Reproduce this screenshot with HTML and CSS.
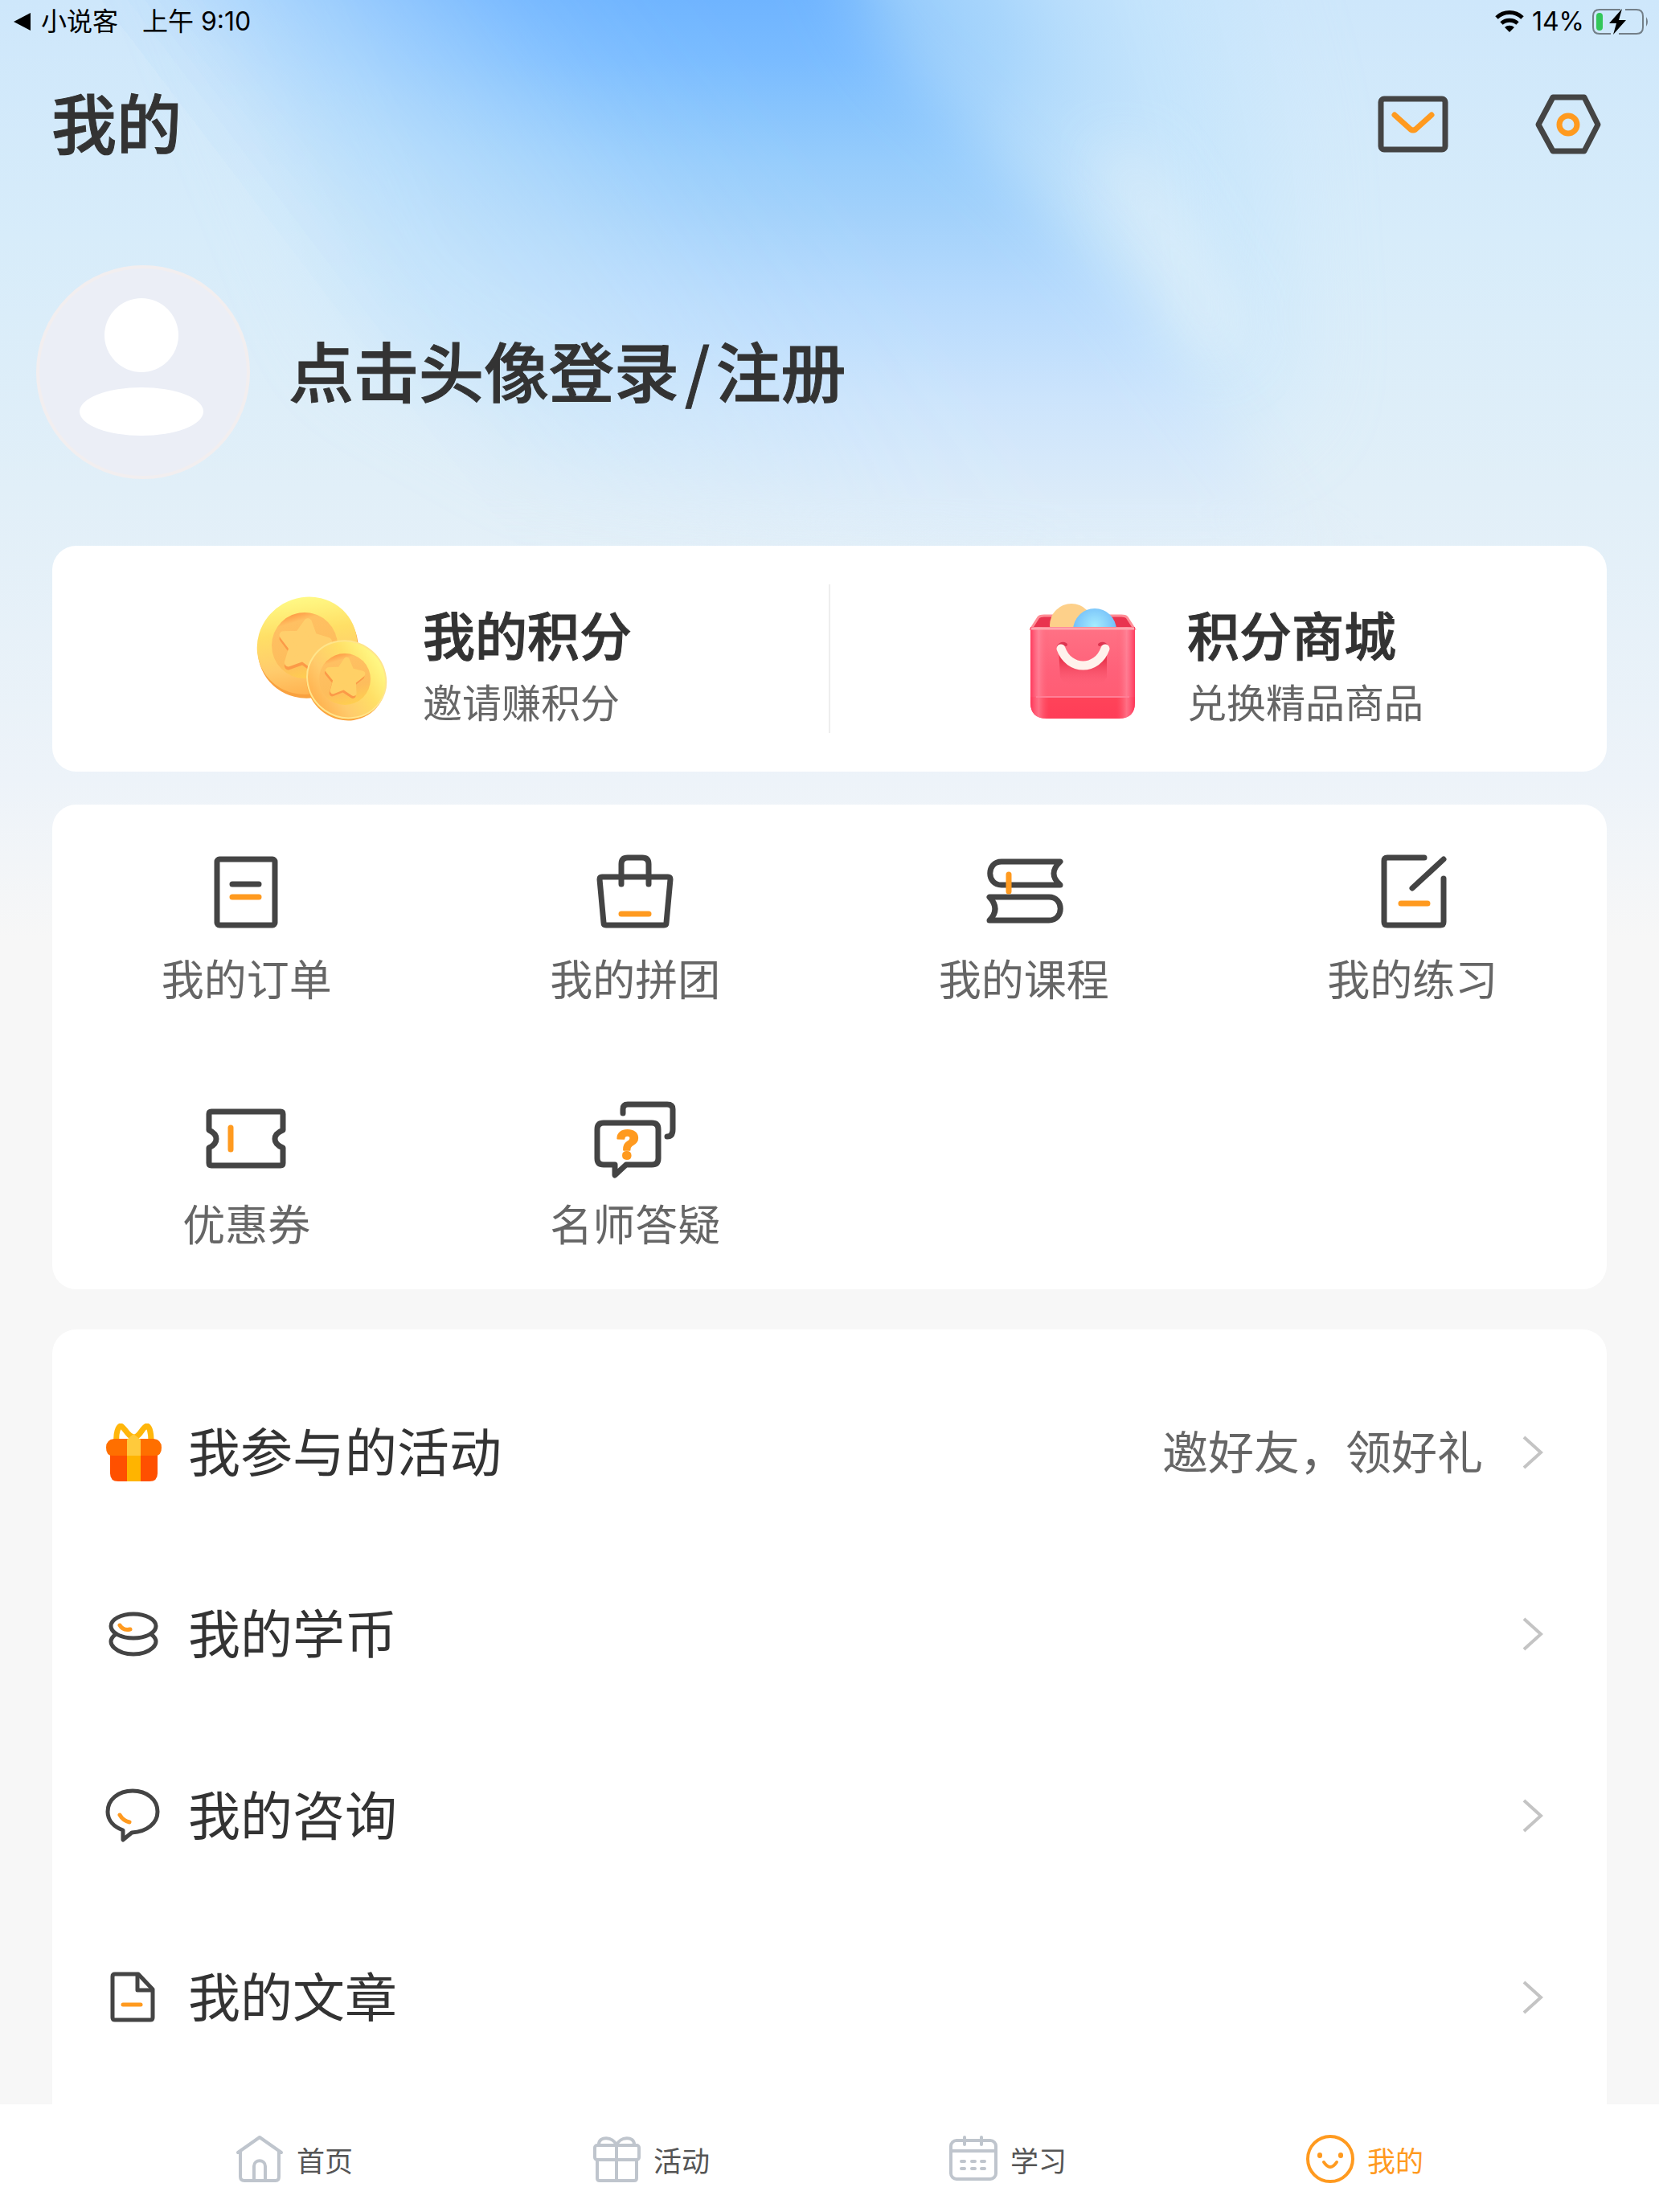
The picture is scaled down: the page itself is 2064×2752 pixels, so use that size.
FILE: index.html
```html
<!DOCTYPE html>
<html lang="zh-CN">
<head>
  <meta charset="UTF-8" />
  <meta name="viewport" content="width=device-width, initial-scale=1" />
  <title>我的</title>
  <link rel="stylesheet" href="styles.css">
</head>
<body>
  <svg class="backdrop" viewBox="0 0 2064 1170" preserveAspectRatio="none" aria-hidden="true">
    <defs>
      <linearGradient id="sky" x1="0" y1="0" x2="0" y2="1">
        <stop offset="0" stop-color="#cee7fb" />
        <stop offset="0.25" stop-color="#d7ecfa" />
        <stop offset="0.52" stop-color="#e1eff8" />
        <stop offset="0.83" stop-color="#edf3f9" />
        <stop offset="1" stop-color="#f7f7f7" />
      </linearGradient>
      <linearGradient id="core" gradientUnits="userSpaceOnUse" x1="0" y1="0" x2="0" y2="720">
        <stop offset="0" stop-color="#6fb4ff" />
        <stop offset="0.1" stop-color="#79bbff" />
        <stop offset="0.18" stop-color="#86c3fd" />
        <stop offset="0.28" stop-color="#96ccfc" />
        <stop offset="0.37" stop-color="#a2d1fb" />
        <stop offset="0.51" stop-color="#b6dafd" />
        <stop offset="0.69" stop-color="#cce4fc" />
        <stop offset="0.86" stop-color="#dbebf9" />
        <stop offset="1" stop-color="#e1effa" stop-opacity="0" />
      </linearGradient>
      <linearGradient id="fade" gradientUnits="userSpaceOnUse" x1="130" y1="0" x2="577" y2="-341">
        <stop offset="0" stop-color="#000" />
        <stop offset="0.3" stop-color="#555" />
        <stop offset="0.75" stop-color="#e4e4e4" />
        <stop offset="1" stop-color="#fff" />
      </linearGradient>
      <radialGradient id="wing" gradientUnits="userSpaceOnUse" cx="0" cy="0" r="1" gradientTransform="translate(1060 0) rotate(30) scale(520 330)">
        <stop offset="0" stop-color="#8ec7fc" />
        <stop offset="0.4" stop-color="#a3d3fc" stop-opacity="0.85" />
        <stop offset="1" stop-color="#c4e4fc" stop-opacity="0" />
      </radialGradient>
      <filter id="blurM" x="-50%" y="-50%" width="200%" height="200%"><feGaussianBlur stdDeviation="60" /></filter>
      <filter id="blurS" x="-20%" y="-20%" width="140%" height="140%"><feGaussianBlur stdDeviation="36" /></filter>
      <mask id="beam" maskUnits="userSpaceOnUse" x="0" y="0" width="2064" height="1170">
        <path d="M-200 -200H990L1060 0L1110 80L1270 230L1400 370L1700 800V1300H-200Z" fill="url(#fade)" filter="url(#blurS)" />
      </mask>
    </defs>
    <rect width="2064" height="1170" fill="url(#sky)" />
    <path d="M200 -200H1480L1580 160L1600 500L1300 600L700 560L450 420Z" fill="#bfe3fd" opacity="0.5" filter="url(#blurM)" />
    <rect width="2064" height="600" fill="url(#wing)" />
    <path d="M1360 180L1420 190L1560 420L1500 460Z" fill="#e2f0f9" opacity="0.7" filter="url(#blurS)" />
    <rect width="2064" height="720" fill="url(#core)" mask="url(#beam)" />
  </svg>

  <div class="status-bar">
    <a href="#" class="back-app">
      <svg width="24" height="24" viewBox="0 0 24 24"><path d="M1 12L22 1V23Z" fill="#000" /></svg>
      小说客
    </a>
    <span class="clock">上午 9:10</span>
    <div class="status-right">
      <svg width="38" height="28" viewBox="0 0 38 28">
        <path d="M3 9A23 23 0 0 1 35 9M9 16A15 15 0 0 1 29 16" fill="none" stroke="#000" stroke-width="5" />
        <path d="M13 21A9 9 0 0 1 25 21L19 27Z" fill="#000" />
      </svg>
      <span>14%</span>
      <svg width="72" height="34" viewBox="0 0 72 34">
        <path d="M36 2H10Q2 2 2 10V24Q2 32 10 32H24M42 2H56Q64 2 64 10V24Q64 32 56 32H34" fill="none" stroke="#737f88" stroke-width="2" />
        <rect x="6" y="6" width="8" height="22" rx="4" fill="#33c759" />
        <path d="M38 1L22 19H31L27 33L43 15H34Z" fill="#000" />
        <path d="M68 11Q72 17 68 23Z" fill="#737f88" />
      </svg>
    </div>
  </div>

  <main>
    <header>
      <h1>我的</h1>
      <div class="actions">
        <button type="button" aria-label="消息">
          <svg width="88" height="88" viewBox="0 0 88 88" class="line-icon">
            <rect x="4" y="13" width="80" height="63" rx="4" />
            <path class="accent" d="M21 33L41 51Q44 53 47 51L67 33" />
          </svg>
        </button>
        <button type="button" aria-label="设置">
          <svg width="88" height="88" viewBox="0 0 88 88" class="line-icon">
            <path d="M24 11H63L80 45L63 78H24L6 45Z" />
            <circle class="accent" cx="43" cy="45" r="11" />
          </svg>
        </button>
      </div>
    </header>

    <section class="profile">
      <button type="button" class="avatar" aria-label="头像">
        <svg viewBox="0 0 258 258">
          <circle cx="127" cy="83" r="46" fill="#fff" />
          <ellipse cx="127" cy="178" rx="77" ry="30" fill="#fff" />
        </svg>
      </button>
      <a href="#" class="login"><span>点击头像登录</span><span>/</span><span>注册</span></a>
    </section>

    <section class="card points">
      <a href="#" class="point-item">
        <svg width="172" height="172" viewBox="-3 2 172 172">
          <defs>
            <linearGradient id="gold" x1="0.75" y1="0.05" x2="0.35" y2="1">
              <stop offset="0" stop-color="#fffa86" />
              <stop offset="0.35" stop-color="#ffdf66" />
              <stop offset="0.7" stop-color="#ffcb6c" />
              <stop offset="1" stop-color="#ffb14e" />
            </linearGradient>
            <linearGradient id="dish" x1="0.3" y1="0" x2="0.6" y2="1">
              <stop offset="0" stop-color="#ff9440" />
              <stop offset="0.15" stop-color="#ffc062" />
              <stop offset="0.7" stop-color="#fdbd5c" />
              <stop offset="1" stop-color="#ffcf50" />
            </linearGradient>
            <path id="star" d="M0 -29L9 -12L28 -9L14 5L17 24L0 15L-17 24L-14 5L-28 -9L-9 -12Z" stroke-width="10" stroke-linejoin="round" />
          </defs>
          <g transform="rotate(-30 70 73)">
            <ellipse cx="69" cy="75" rx="63" ry="61" fill="#f9a13f" />
            <ellipse cx="70" cy="71" rx="63" ry="60" fill="url(#gold)" />
          </g>
          <circle cx="66" cy="71" r="41" fill="url(#dish)" />
          <use href="#star" transform="translate(66 75) rotate(8)" fill="#fb9a48" stroke="#fb9a48" />
          <use href="#star" transform="translate(66 71) rotate(8)" fill="#ffcf6c" stroke="#ffcf6c" />
          <g transform="rotate(35 117 115)">
            <ellipse cx="118" cy="116" rx="50" ry="47" fill="#fba53f" />
            <ellipse cx="117" cy="113" rx="50" ry="47" fill="url(#gold)" stroke="#ffe58b" stroke-width="2" />
          </g>
          <circle cx="116" cy="113" r="32" fill="url(#dish)" />
          <g transform="translate(115 114) rotate(6) scale(0.75)">
            <use href="#star" fill="#fb9a48" stroke="#fb9a48" />
          </g>
          <g transform="translate(116 111) rotate(6) scale(0.75)">
            <use href="#star" fill="#ffd066" stroke="#ffd066" />
          </g>
        </svg>
        <div class="point-text">
          <h2>我的积分</h2>
          <p>邀请赚积分</p>
        </div>
      </a>
      <a href="#" class="point-item">
        <svg width="172" height="172" viewBox="0 0 172 172">
          <defs>
            <linearGradient id="bag" x1="0" y1="0" x2="0" y2="1">
              <stop offset="0" stop-color="#ff7285" />
              <stop offset="0.5" stop-color="#ff6079" />
              <stop offset="0.76" stop-color="#ff5d74" />
              <stop offset="0.77" stop-color="#ff4359" />
              <stop offset="1" stop-color="#ff3d58" />
            </linearGradient>
            <linearGradient id="side" x1="0" y1="0" x2="1" y2="0">
              <stop offset="0" stop-color="#ff2f55" stop-opacity="0.8" />
              <stop offset="0.08" stop-color="#ff8fa3" stop-opacity="0.6" />
              <stop offset="0.18" stop-color="#ff5a70" stop-opacity="0" />
              <stop offset="0.82" stop-color="#ff5a70" stop-opacity="0" />
              <stop offset="0.92" stop-color="#ff8fa3" stop-opacity="0.6" />
              <stop offset="1" stop-color="#ff2f55" stop-opacity="0.8" />
            </linearGradient>
            <linearGradient id="mouth" x1="0" y1="0" x2="0" y2="1">
              <stop offset="0.3" stop-color="#e8324a" stop-opacity="0.9" />
              <stop offset="1" stop-color="#ff6278" stop-opacity="0" />
            </linearGradient>
            <radialGradient id="ball" cx="0.5" cy="0.4" r="0.6">
              <stop offset="0" stop-color="#a5ecff" />
              <stop offset="1" stop-color="#6bb6f8" />
            </radialGradient>
          </defs>
          <path d="M22 48L31 34Q33 32 38 32H134Q139 32 141 34L150 48Z" fill="#e9344f" stroke="#ff8d96" stroke-width="3" />
          <circle cx="72" cy="44" r="27" fill="#fdd08a" />
          <circle cx="101" cy="50" r="27" fill="url(#ball)" />
          <path d="M21 46H151V140Q151 160 131 160H41Q21 160 21 140Z" fill="url(#bag)" />
          <path d="M21 46H151V140Q151 160 131 160H41Q21 160 21 140Z" fill="url(#side)" />
          <path d="M22 48H150" stroke="#ffa6ae" stroke-width="3" />
          <path d="M28 133H144" stroke="#ff7f96" stroke-width="2" />
          <path d="M56 74Q86 124 116 74V108Q114 118 86 120Q60 118 58 108Z" fill="url(#mouth)" />
          <path d="M56 70Q60 65 65 68M107 68Q112 65 116 70" fill="none" stroke="#dd3550" stroke-width="4" stroke-linecap="round" />
          <path d="M59 73C69 101 104 101 114 73" fill="none" stroke="#fff2ec" stroke-width="11" stroke-linecap="round" />
        </svg>
        <div class="point-text">
          <h2>积分商城</h2>
          <p>兑换精品商品</p>
        </div>
      </a>
    </section>

    <nav class="card shortcuts" aria-label="快捷入口">
      <a href="#">
        <svg viewBox="0 0 104 104" class="line-icon">
          <rect x="15" y="11" width="72" height="82" rx="3" />
          <path d="M34 42H67" />
          <path class="accent" d="M34 58H67" />
        </svg>
        我的订单
      </a>
      <a href="#">
        <svg viewBox="0 0 104 104" class="line-icon">
          <path d="M11 33H93Q96 33 96 36L91 90Q91 93 88 93H16Q13 93 13 90L8 36Q8 33 11 33Z" />
          <path d="M35 42V17Q35 9 43 9H61Q69 9 69 17V42" />
          <path class="accent" d="M35 79H69" />
        </svg>
        我的拼团
      </a>
      <a href="#">
        <svg viewBox="0 0 104 104" class="line-icon">
          <path d="M97 14H24C5 14 5 43 24 43H97Q81 29 97 14Z" />
          <path d="M9 58H83C102 58 102 87 83 87H9Q23 73 9 58Z" />
          <path class="accent" d="M33 30V51" />
        </svg>
        我的课程
      </a>
      <a href="#">
        <svg viewBox="0 0 104 104" class="line-icon">
          <path d="M67 9H21Q17 9 17 13V89Q17 93 21 93H87Q91 93 91 89V35" />
          <path d="M91 11L52 47" />
          <path class="accent" d="M38 66H71" />
        </svg>
        我的练习
      </a>
      <a href="#">
        <svg viewBox="0 0 104 104" class="line-icon">
          <path d="M8 20H94Q97 20 97 23V43Q87 47 87 54Q87 61 97 65V84Q97 87 94 87H8Q5 87 5 84V65Q14 61 14 54Q14 47 5 43V23Q5 20 8 20Z" />
          <path class="accent" d="M32 40V67" />
        </svg>
        优惠券
      </a>
      <a href="#">
        <svg viewBox="0 0 104 104" class="line-icon">
          <path d="M37 22V17Q37 11 43 11H92Q99 11 99 17V42Q99 51 92 51" />
          <path d="M13 34H73Q81 34 81 42V78Q81 86 73 86H41L27 99V86H13Q5 86 5 78V42Q5 34 13 34Z" />
          <text x="43" y="79" text-anchor="middle">?</text>
        </svg>
        名师答疑
      </a>
    </nav>

    <section class="card menu">
      <a href="#" class="menu-row">
        <svg width="72" height="72" viewBox="0 0 72 72">
          <path d="M15 22C14 12 17 4 20 3C24 3 29 17 37 17C44 17 48 3 53 3C56 4 58 12 58 22" fill="none" stroke="#ffb60a" stroke-width="7" />
          <path d="M7 34H66V62Q66 72 56 72H17Q7 72 7 62Z" fill="#ff5000" />
          <path d="M12 19H61Q71 20 71 30Q71 40 63 40H10Q2 40 2 30Q2 20 12 19Z" fill="#ff6f00" />
          <rect x="28" y="40" width="17" height="32" fill="#ffb400" />
          <path d="M28 40V20L36 13L45 20V40Z" fill="#ffca3c" />
        </svg>
        <span class="menu-label">我参与的活动</span>
        <span class="menu-value">邀好友，领好礼</span>
        <svg class="chevron" width="28" height="44" viewBox="0 0 28 44"><path d="M3 3L24 22L3 41" /></svg>
      </a>
      <a href="#" class="menu-row">
        <svg width="72" height="72" viewBox="0 0 72 72" class="line-icon thin">
          <ellipse cx="36" cy="26" rx="28" ry="15" />
          <path d="M13 37C-1 48 17 61 36 61S73 48 59 37" />
          <path class="accent" d="M19 25Q23 32 32 30" />
        </svg>
        <span class="menu-label">我的学币</span>
        <svg class="chevron" width="28" height="44" viewBox="0 0 28 44"><path d="M3 3L24 22L3 41" /></svg>
      </a>
      <a href="#" class="menu-row">
        <svg width="72" height="72" viewBox="0 0 72 72" class="line-icon thin">
          <path d="M35 5C53 5 66 16 66 31C66 45 53 56 34 57L23 66V54C12 50 4 42 4 31C4 16 17 5 35 5Z" />
          <path class="accent" d="M19 35Q23 42 31 44" />
        </svg>
        <span class="menu-label">我的咨询</span>
        <svg class="chevron" width="28" height="44" viewBox="0 0 28 44"><path d="M3 3L24 22L3 41" /></svg>
      </a>
      <a href="#" class="menu-row">
        <svg width="72" height="72" viewBox="0 0 72 72" class="line-icon thin">
          <path d="M13 7H42L60 26V61Q60 64 57 64H13Q10 64 10 61V10Q10 7 13 7Z" />
          <path d="M41 8V27H59" />
          <path class="accent" d="M23 45H45" />
        </svg>
        <span class="menu-label">我的文章</span>
        <svg class="chevron" width="28" height="44" viewBox="0 0 28 44"><path d="M3 3L24 22L3 41" /></svg>
      </a>
    </section>
  </main>

  <nav class="tab-bar" aria-label="主导航">
    <a href="#">
      <svg width="60" height="60" viewBox="0 0 60 60">
        <path d="M3 22L30 3L57 22M6 20V52Q6 57 11 57H50Q54 57 54 52V20M23 57V39C23 30 37 30 37 39V57" />
      </svg>
      首页
    </a>
    <a href="#">
      <svg width="60" height="60" viewBox="0 0 60 60">
        <rect x="3" y="13" width="55" height="18" rx="3" />
        <path d="M6 31V54Q6 57 9 57H52Q55 57 55 54V31M30 13V57M30 13C26 2 8 1 8 12M30 13C34 2 52 1 52 12" />
      </svg>
      活动
    </a>
    <a href="#">
      <svg width="60" height="60" viewBox="0 0 60 60">
        <rect x="2" y="7" width="56" height="48" rx="7" />
        <path d="M2 20H58M19 3V12M40 3V12" />
        <path d="M15 33H19M28 33H32M40 33H44M15 42H19M28 42H32M40 42H44" />
      </svg>
      学习
    </a>
    <a href="#" class="active">
      <svg width="60" height="60" viewBox="0 0 60 60">
        <circle cx="30" cy="30" r="28" />
        <path d="M17 25V26M43 25V26" stroke-width="6" />
        <path d="M22 34Q30 46 38 34" />
      </svg>
      我的
    </a>
  </nav>
</body>
</html>
```

FILE: styles.css
```css
* {
  box-sizing: border-box;
}
body {
  margin: 0;
  height: 100vh;
  display: flex;
  flex-direction: column;
  position: relative;
  overflow: hidden;
  background-color: #f7f7f7;
  color: #333;
  font-family: "Noto Sans CJK SC", sans-serif;
}
a {
  color: inherit;
  text-decoration: none;
}
button {
  padding: 0;
  border: none;
  background: none;
  cursor: pointer;
}
svg {
  display: block;
  flex-shrink: 0;
}
h1, h2, p {
  margin: 0;
}
h1, h2, .login {
  font-weight: 500;
  -webkit-text-stroke: 1px #333;
}
.backdrop {
  position: absolute;
  top: 0;
  left: 0;
  width: 100%;
  height: 1170px;
  z-index: -1;
}

/* status bar */
.status-bar {
  height: 54px;
  padding: 0 12px 0 16px;
  display: flex;
  align-items: center;
  gap: 30px;
  color: #000;
  font-family: Inter, "Noto Sans CJK SC", sans-serif;
  font-size: 32px;
  line-height: 40px;
}
.back-app {
  display: flex;
  align-items: center;
  gap: 11px;
}
.status-right {
  margin-left: auto;
  display: flex;
  align-items: center;
  gap: 9px;
}

/* line icons */
.line-icon {
  fill: none;
  stroke: #444;
  stroke-width: 7;
  stroke-linecap: round;
  stroke-linejoin: round;
}
.line-icon .accent {
  stroke: #ff9a1f;
}
.line-icon.thin {
  stroke-width: 5;
}
.line-icon text {
  fill: #ff9a1f;
  stroke: #ff9a1f;
  stroke-width: 2;
  font-family: Inter, sans-serif;
  font-size: 50px;
  font-weight: 800;
}

main {
  flex: 1;
  min-height: 0;
  overflow: hidden;
}
header {
  height: 200px;
  padding: 0 68px 0 64px;
  display: flex;
  justify-content: space-between;
  align-items: center;
}
header h1 {
  padding-bottom: 8px;
  font-size: 81px;
  line-height: 120px;
}
.actions {
  display: flex;
  gap: 106px;
}

.profile {
  padding: 76px 45px 83px;
  display: flex;
  align-items: center;
  gap: 48px;
}
.avatar {
  width: 266px;
  height: 266px;
  border: 4px solid #f2eeef;
  border-radius: 50%;
  background: #ebeef6;
}
.login {
  padding-bottom: 8px;
  display: flex;
  gap: 7px;
  font-size: 81px;
  line-height: 120px;
}

.card {
  margin: 0 65px;
  background: #fff;
  border-radius: 30px;
}

/* points */
.points {
  display: flex;
  padding: 48px 0;
}
.point-item {
  flex: 1;
  display: flex;
  justify-content: center;
  align-items: center;
  gap: 44px;
  height: 185px;
}
.point-item + .point-item {
  border-left: 2px solid #eee;
}
.point-text {
  padding-top: 8px;
}
.point-text h2 {
  font-size: 65px;
  line-height: 96px;
}
.point-text p {
  font-size: 49px;
  line-height: 72px;
  color: #666;
}

/* shortcuts */
.shortcuts {
  margin-top: 41px;
  padding: 57px 0 47px;
  display: grid;
  grid-template-columns: repeat(4, 1fr);
  row-gap: 111px;
}
.shortcuts a {
  display: flex;
  flex-direction: column;
  align-items: center;
  gap: 18px;
  font-size: 53px;
  line-height: 72px;
  color: #666;
}
.shortcuts svg {
  width: 104px;
  height: 104px;
}

/* menu list */
.menu {
  margin-top: 50px;
  padding: 40px 78px 80px 65px;
}
.menu-row {
  height: 226px;
  display: flex;
  align-items: center;
}
.menu-label {
  margin-left: 32px;
  padding-bottom: 8px;
  flex: 1;
  font-size: 65px;
}
.menu-value {
  padding-bottom: 8px;
  font-size: 57px;
  color: #666;
}
.chevron {
  margin-left: 48px;
  fill: none;
  stroke: #c4c4c4;
  stroke-width: 4;
}

/* bottom tabs */
.tab-bar {
  height: 134px;
  padding: 2px 144px 0;
  display: flex;
  background: #fff;
}
.tab-bar a {
  flex: 1;
  display: flex;
  justify-content: center;
  align-items: center;
  gap: 16px;
  font-size: 35px;
  color: #555;
}
.tab-bar svg {
  fill: none;
  stroke: #bfc5cd;
  stroke-width: 4;
  stroke-linecap: round;
  stroke-linejoin: round;
}
.tab-bar .active {
  color: #ff9a1f;
}
.tab-bar .active svg {
  stroke: #ff9a1f;
}
```
